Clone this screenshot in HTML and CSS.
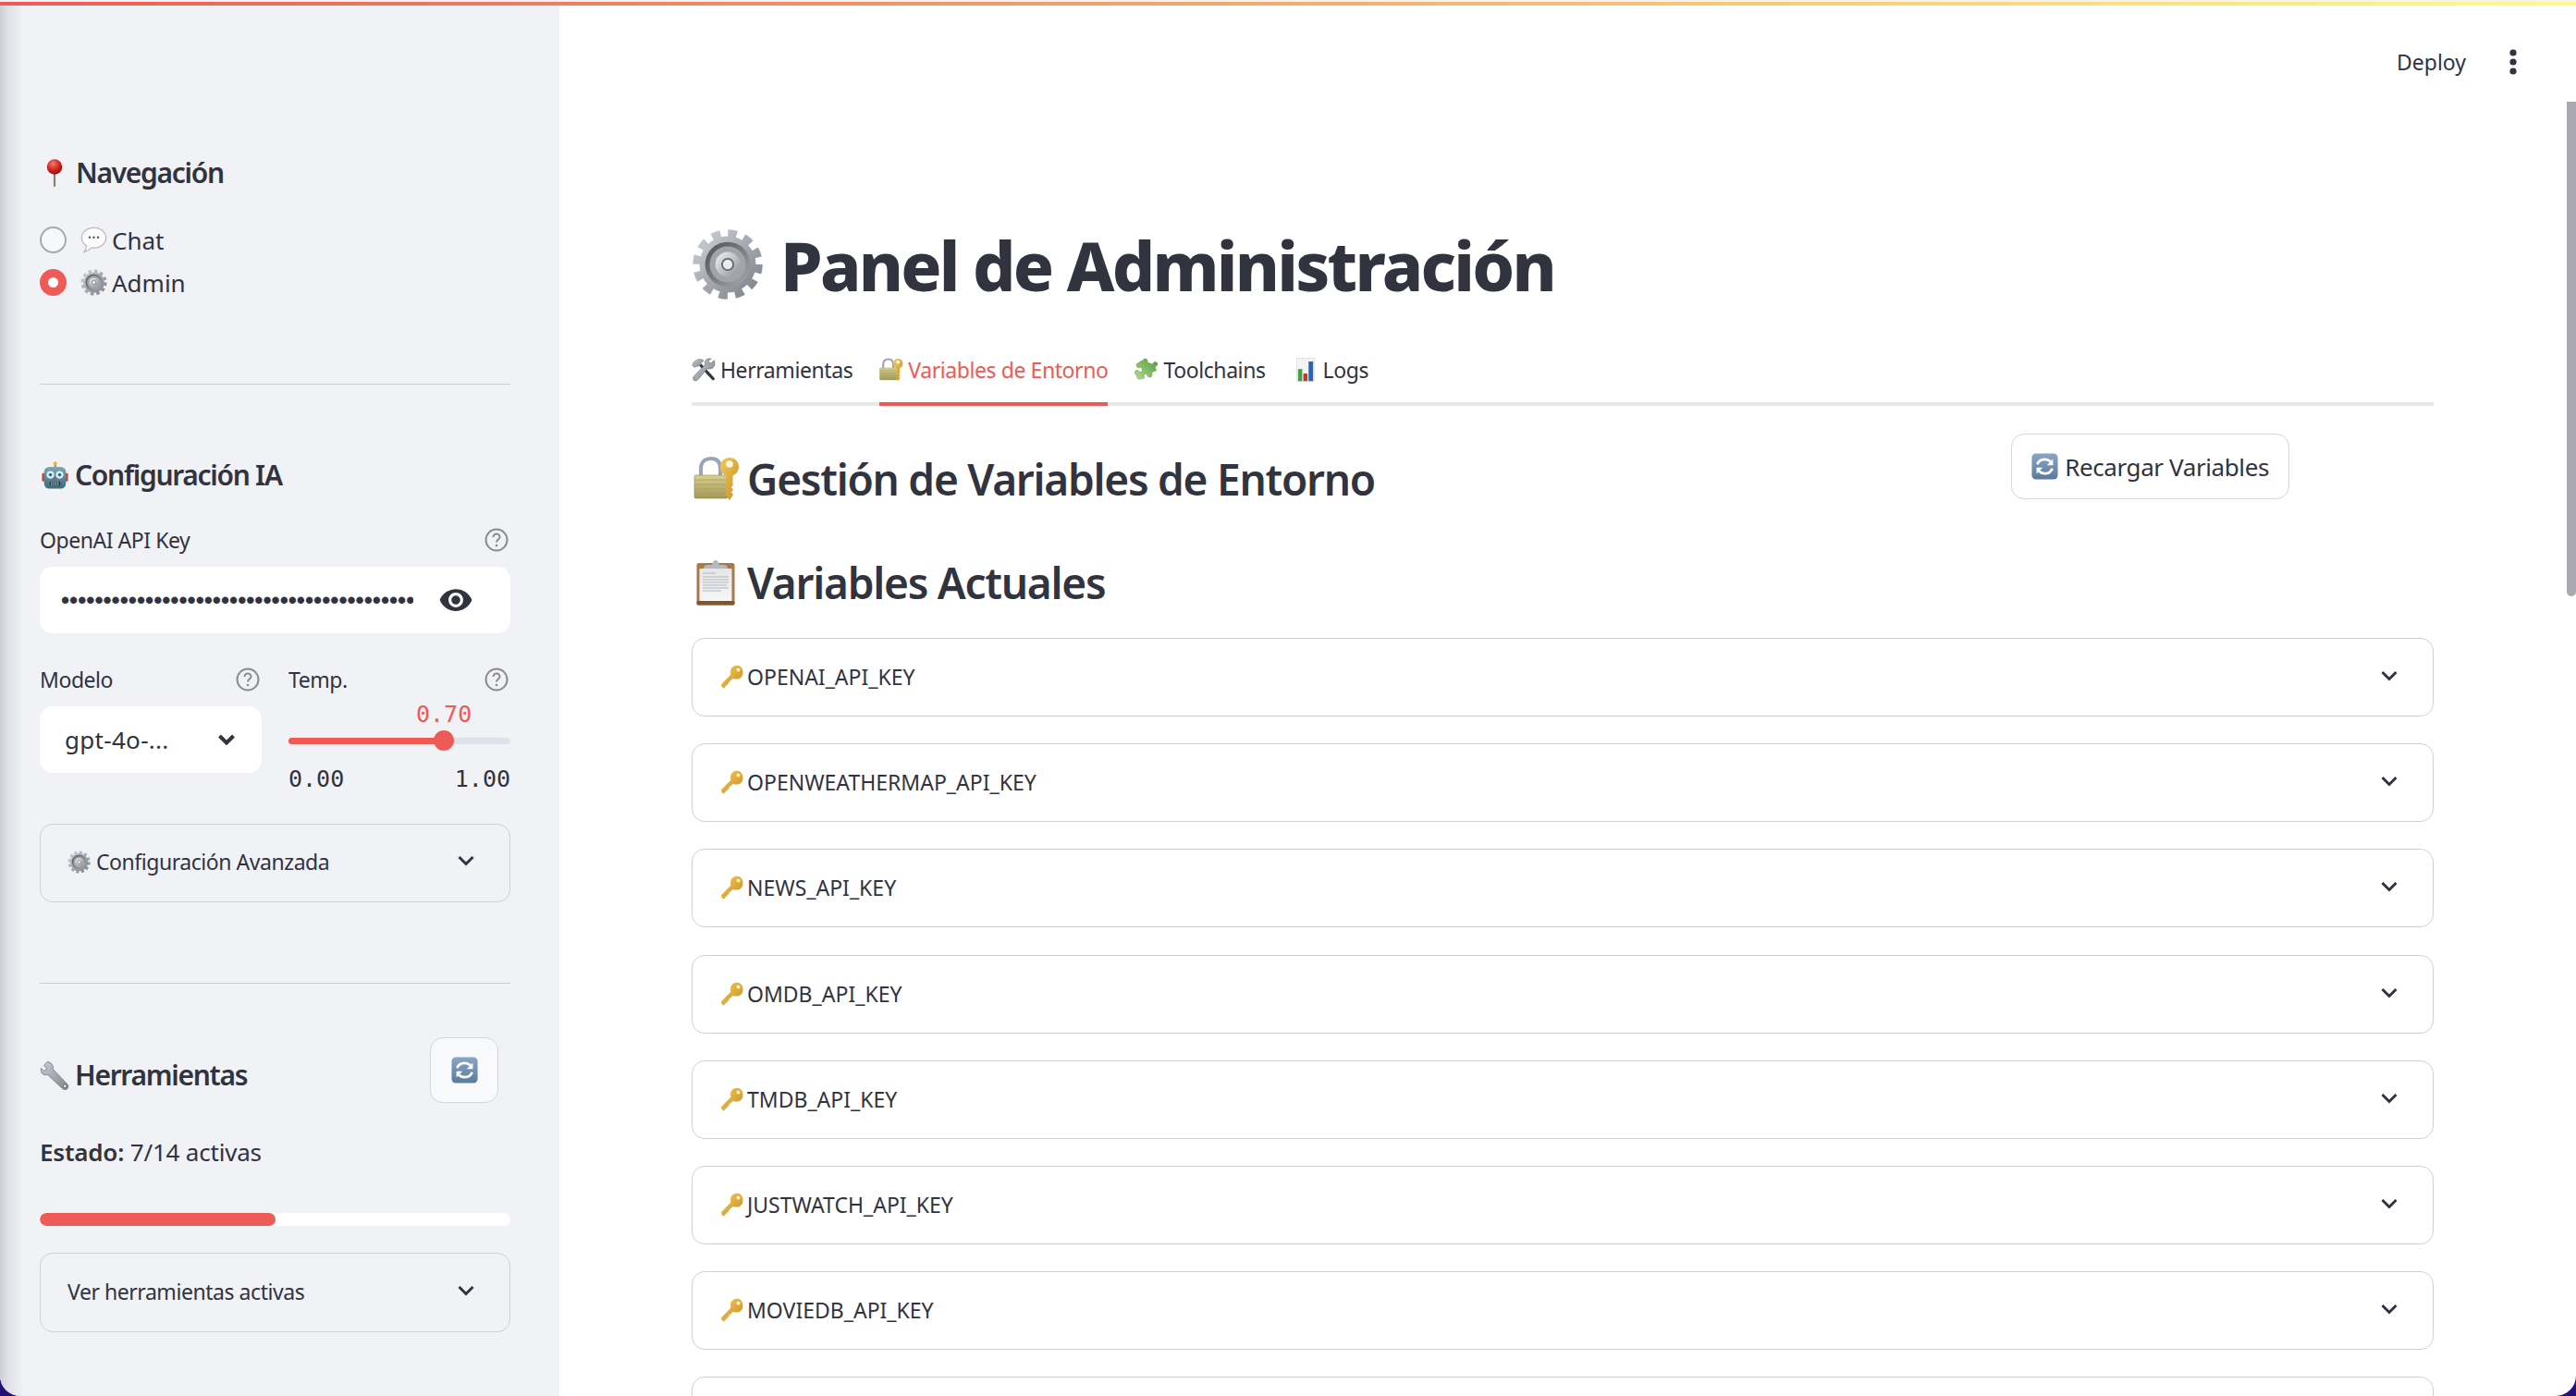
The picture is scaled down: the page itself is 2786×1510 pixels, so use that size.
FILE: index.html
```html
<!DOCTYPE html>
<html lang="es">
<head>
    <meta charset="UTF-8">
    <title>Panel de Administración</title>
    <link rel="stylesheet" href="styles.css">
</head>
<body>

    <!-- Emoji style icons -->
    <svg class="sprite" xmlns="http://www.w3.org/2000/svg">
        <defs>
            <radialGradient id="g-pin" cx="40%" cy="30%" r="70%"><stop offset="0" stop-color="#f47a6c"/><stop offset=".6" stop-color="#d3231f"/><stop offset="1" stop-color="#8e1210"/></radialGradient>
            <linearGradient id="g-steel" x1="0" y1="0" x2="1" y2="1"><stop offset="0" stop-color="#c9ced6"/><stop offset="1" stop-color="#7f848c"/></linearGradient>
            <linearGradient id="g-ring" x1="0" y1="0" x2="1" y2="1"><stop offset="0" stop-color="#4d4f54"/><stop offset="1" stop-color="#a9abb0"/></linearGradient>
            <linearGradient id="g-hub" x1="0" y1="0" x2="1" y2="1"><stop offset="0" stop-color="#f2f3f5"/><stop offset="1" stop-color="#8f9196"/></linearGradient>
            <linearGradient id="g-refresh" x1="0" y1="0" x2="0" y2="1"><stop offset="0" stop-color="#8ba6c4"/><stop offset="1" stop-color="#5a7a9e"/></linearGradient>
            <linearGradient id="g-robot" x1="0" y1="0" x2="0" y2="1"><stop offset="0" stop-color="#7fa7b3"/><stop offset="1" stop-color="#3f6a78"/></linearGradient>
            <linearGradient id="g-brass" x1="0" y1="0" x2="0" y2="1"><stop offset="0" stop-color="#d9d193"/><stop offset=".5" stop-color="#bcb270"/><stop offset="1" stop-color="#a39a5c"/></linearGradient>
            <linearGradient id="g-gold" x1="0" y1="0" x2="1" y2="1"><stop offset="0" stop-color="#f2c95c"/><stop offset="1" stop-color="#c98f22"/></linearGradient>
            <linearGradient id="g-puzzle" x1="0" y1="1" x2="1" y2="0"><stop offset="0" stop-color="#b9dc8e"/><stop offset="1" stop-color="#4f9a3a"/></linearGradient>
            <linearGradient id="g-paper" x1="0" y1="0" x2="0" y2="1"><stop offset="0" stop-color="#e4e6e8"/><stop offset="1" stop-color="#f6f6f6"/></linearGradient>
        </defs>
        <symbol id="i-pin" viewBox="0 0 20 30">
            <rect x="8.900" y="13" width="2.200" height="17" rx="1" fill="#8c7f70"/>
            <circle cx="10" cy="8.500" r="8.300" fill="url(#g-pin)"/>
        </symbol>
        <symbol id="i-bubble" viewBox="0 0 32 32">
            <path d="M16 1.500C7.700 1.500 1.500 6.800 1.500 13.500c0 4 2.200 7.300 5.700 9.400-.3 2.400-1 5-2.700 7.600 3.600-1 6.700-2.900 8.900-5.200 .8.100 1.700.2 2.600.2 8.300 0 14.500-5.300 14.500-12S24.300 1.500 16 1.500z" fill="#fbfbfc" stroke="#b9bbc0" stroke-width="1.400"/>
            <circle cx="11" cy="13" r="1.300" fill="#555"/><circle cx="16" cy="13" r="1.300" fill="#555"/><circle cx="21" cy="13" r="1.300" fill="#555"/>
        </symbol>
        <symbol id="i-gear" viewBox="0 0 64 64">
            <circle cx="32" cy="32" r="26.500" fill="none" stroke="url(#g-steel)" stroke-width="9" stroke-dasharray="7.500 6.380"/>
            <circle cx="32" cy="32" r="25" fill="url(#g-steel)"/>
            <circle cx="32" cy="32" r="20" fill="url(#g-ring)"/>
            <circle cx="32" cy="32" r="16" fill="#a2a4a9"/>
            <circle cx="32" cy="32" r="11" fill="url(#g-hub)"/>
            <circle cx="32" cy="32" r="5" fill="#e9eaec" stroke="#66686d" stroke-width="1.500"/>
        </symbol>
        <symbol id="i-robot" viewBox="0 0 32 34">
            <rect x="15" y="1" width="2.500" height="6" fill="#8b8f99"/>
            <circle cx="16.200" cy="2.500" r="2.200" fill="#f0b23c"/>
            <rect x="0.500" y="14" width="4" height="10" rx="1.500" fill="#c4413a"/>
            <rect x="27.500" y="14" width="4" height="10" rx="1.500" fill="#c4413a"/>
            <rect x="3" y="6.500" width="26" height="26" rx="6" fill="url(#g-robot)"/>
            <circle cx="10.500" cy="16" r="4.500" fill="#d8f0f6"/><circle cx="21.500" cy="16" r="4.500" fill="#d8f0f6"/>
            <circle cx="10.500" cy="16" r="2" fill="#2a6f98"/><circle cx="21.500" cy="16" r="2" fill="#2a6f98"/>
            <path d="M16 18l2 3h-4z" fill="#d2443c"/>
            <rect x="9.500" y="24" width="13" height="5" rx="1.500" fill="#27424e"/>
            <path d="M12 24v5M14.500 24v5M17 24v5M19.500 24v5" stroke="#a8c0c8" stroke-width="1"/>
        </symbol>
        <symbol id="i-wrench" viewBox="0 0 32 32">
            <path d="M8 1.500l-3.500 4 3 3.300-2.800 2.700-3.300-3C1 11.500 1.500 14 4 15.200c1.500.7 3.100.7 4.500.2L25 31c1.600 1.100 3.800.8 5-.6 1.200-1.500 1-3.700-.4-5L14.300 9.500c.5-2.500-.3-5-2.300-6.600-1.100-.9-2.600-1.400-4-1.400z" fill="url(#g-steel)" stroke="#74787f" stroke-width=".8"/>
            <circle cx="27.200" cy="27.800" r="1.800" fill="#f0f2f6" stroke="#5d6066" stroke-width=".8"/>
        </symbol>
        <symbol id="i-refresh" viewBox="0 0 32 32">
            <rect x="0.500" y="0.500" width="31" height="31" rx="5" fill="url(#g-refresh)"/>
            <path d="M7 13.500C8.500 9.500 12 7.500 16 7.500c2.800 0 5 1 6.800 2.800" fill="none" stroke="#fff" stroke-width="3"/>
            <path d="M25.800 7.200v7.300h-7.300z" fill="#fff"/>
            <path d="M25 18.500c-1.500 4-5 6-9 6-2.800 0-5-1-6.800-2.800" fill="none" stroke="#fff" stroke-width="3"/>
            <path d="M6.200 24.800v-7.300h7.300z" fill="#fff"/>
        </symbol>
        <symbol id="i-tools" viewBox="0 0 32 32">
            <path d="M10 10.500L27.500 29.500c.8.900 2.300.3 2.800-.4.500-.7.500-1.900-.3-2.600L13 8z" fill="#33363b"/>
            <path d="M2.500 6.500C6 2 11 1 15.500 3l-1 2.500-2 .5-.5 2-3.500 3.500-2-.5L4 13l-3-3z" fill="url(#g-steel)" stroke="#6d7077" stroke-width=".8"/>
            <path d="M30 3.500l-4 4-3-1 -1-3 4-2c-3-1-7 0-8 3-.5 1.500-.2 3 .5 4L3.300 24.500c-1.600 1.500-1.700 3.600-.5 5 1.300 1.500 3.600 1.500 5 0L21 14.300c3.200 1 6.500.2 8.500-2.300 1.200-1.700 1.500-5 .5-8.500z" fill="url(#g-steel)" stroke="#5f6269" stroke-width=".8"/>
        </symbol>
        <symbol id="i-lockkey" viewBox="0 0 50 48">
            <path d="M8 22V13C8 5 13 2 19 2s10 3 10 11v9" fill="none" stroke="#9aa6b8" stroke-width="4"/>
            <rect x="1" y="20" width="36" height="25" rx="1.500" fill="url(#g-brass)" stroke="#8f8750" stroke-width=".6"/>
            <path d="M1 25h36M1 30h36M1 35h36M1 40h36" stroke="#a89f62" stroke-width=".8"/>
            <path d="M39 1c-5.800 0-10 4.300-10 10 0 4.400 2.500 8 6.300 9.400V42l3.700 5 3.500-5v-2l-2-1.500 2-1.500v-2.500l-2-1.500 2-1.500V20.400c3.800-1.400 6.500-5 6.500-9.400 0-5.700-4.200-10-10-10z" fill="url(#g-gold)"/>
            <circle cx="39" cy="8" r="3.800" fill="#fff7dd"/>
        </symbol>
        <symbol id="i-puzzle" viewBox="0 0 32 32">
            <path d="M13 1.500c2.600-.8 4.500 1 4.200 3.200-.1 1 .3 1.800 1.300 2.100l4.300 1.500c1 .3 1.600-.1 2-1 .9-2 3.500-2.500 5-1 1.400 1.500 1 4-1 4.800-.9.400-1.400 1-1 2l1.200 3.800-5 2c-1 .4-1.300 1.100-.9 2 .9 2 0 4.200-2 4.800-2.200.7-4.200-.9-4.200-3 0-1-.5-1.600-1.500-1.300l-3.400 1.100 1 3c.4 1.100-.1 1.700-1.100 2-2.200.9-4.800.4-5.600 1-1.700-.1-3.400-2-3-4.100.2-1-.3-1.700-1.200-2-2-1-2.300-3.400-.9-4.900 1.400-1.500 3.800-1.200 4.800.5.500.9 1.100 1.200 2 .9l3-1-1.500-4.300c-.3-1-1-1.200-1.900-.8C5.500 14 3.200 13 2.700 10.800 2.200 8.800 3.600 6.900 5.700 6.800c1-.1 1.500-.6 1.300-1.600L10 4c1-.4 1.700-1.700 3-2.500z" fill="url(#g-puzzle)" stroke="#4c8a39" stroke-width=".6"/>
        </symbol>
        <symbol id="i-chart" viewBox="0 0 24 32">
            <rect x="0.500" y="0.500" width="23" height="31" fill="#f3f4f6" stroke="#d5d7da" stroke-width=".8"/>
            <rect x="2" y="15" width="5.500" height="16" fill="#43a047"/>
            <rect x="9" y="21" width="5.500" height="10" fill="#c4392f"/>
            <rect x="16" y="5" width="6" height="26" fill="#2a63b8"/>
        </symbol>
        <symbol id="i-clipboard" viewBox="0 0 42 50">
            <rect x="0.500" y="4" width="41" height="45.500" rx="2.500" fill="#a8794a"/>
            <rect x="3.500" y="10" width="35" height="35" fill="url(#g-paper)"/>
            <path d="M7 15h14M7 19h28M7 22h28M7 25h28M7 28h26M7 31h28M7 34h20" stroke="#b3b5b8" stroke-width="1"/>
            <path d="M8 10c0-2.500 1.500-4 4-4h5c.5-3 2-5 4-5s3.500 2 4 5h5c2.500 0 4 1.500 4 4z" fill="#b4b8c0"/>
            <rect x="0.500" y="45" width="41" height="4.500" rx="1.500" fill="#7d5731"/>
        </symbol>
        <symbol id="i-key" viewBox="0 0 26 26">
            <path d="M18 .8c-4 0-7 3-7 7 0 1 .2 1.900.5 2.700L.8 21.500l.8 1-.8 1.200 1.500.4.700 1.600 1.700-.9 1-1.900 1.700-.4.300-1.700 1.500-.3.400-2 4.400-3.800c1 .5 2.400.9 3.500.9 4 0 7-3 7-7.200S22 .8 18 .8z" fill="url(#g-gold)"/>
            <circle cx="19.500" cy="5.500" r="2" fill="#fff3c4"/>
        </symbol>
        <symbol id="i-help" viewBox="0 0 26 26">
            <circle cx="13" cy="13" r="11.500" fill="none" stroke="currentColor" stroke-width="2"/>
            <path d="M9.500 10a3.500 3.500 0 0 1 7 0c0 2.400-3.500 2.800-3.500 5.500" fill="none" stroke="currentColor" stroke-width="2"/>
            <circle cx="13" cy="19" r="1.300" fill="currentColor"/>
        </symbol>
        <symbol id="i-chevron" viewBox="0 0 18 12">
            <path d="M1.500 2l7.500 7.500L16.500 2" fill="none" stroke="currentColor"/>
        </symbol>
    </svg>

    <div class="window">
        <div class="top-strip"><div class="top-gradient"></div></div>

        <div class="app">
            <!-- Sidebar -->
            <aside class="sidebar">
                <h3 class="side-title nav-title"><svg class="ic-pin"><use href="#i-pin"/></svg>Navegación</h3>
                <div class="radios">
                    <div class="radio-row"><span class="radio"></span><svg class="ic-29"><use href="#i-bubble"/></svg><span>Chat</span></div>
                    <div class="radio-row"><span class="radio checked"></span><svg class="ic-29"><use href="#i-gear"/></svg><span>Admin</span></div>
                </div>

                <hr class="divider first-divider">

                <h3 class="side-title ia-title"><svg class="ic-robot"><use href="#i-robot"/></svg>Configuración IA</h3>

                <div class="label-row key-label"><span>OpenAI API Key</span><svg class="ic-help"><use href="#i-help"/></svg></div>
                <div class="text-input">
                    <input class="secret" type="password" value="sk-proj-000000000000000000000000000000000000000000000000000000000000" readonly>
                    <svg class="ic-eye" viewBox="0 0 24 24"><path d="M12 4.500C7 4.500 2.730 7.610 1 12c1.730 4.390 6 7.500 11 7.500s9.270-3.110 11-7.500c-1.730-4.390-6-7.500-11-7.500zM12 17c-2.760 0-5-2.240-5-5s2.240-5 5-5 5 2.240 5 5-2.240 5-5 5zm0-8c-1.660 0-3 1.340-3 3s1.340 3 3 3 3-1.340 3-3-1.340-3-3-3z"/></svg>
                </div>

                <div class="model-grid">
                    <div>
                        <div class="label-row"><span>Modelo</span><svg class="ic-help"><use href="#i-help"/></svg></div>
                        <div class="select"><span>gpt-4o-...</span><svg class="ic-chevron bold"><use href="#i-chevron"/></svg></div>
                    </div>
                    <div>
                        <div class="label-row"><span>Temp.</span><svg class="ic-help"><use href="#i-help"/></svg></div>
                        <div class="slider-value">0.70</div>
                        <div class="slider-track">
                            <div class="slider-fill" style="width: 70%"><span class="slider-thumb"></span></div>
                        </div>
                        <div class="slider-ends"><span>0.00</span><span>1.00</span></div>
                    </div>
                </div>

                <div class="expander side-expander advanced">
                    <span class="expander-label"><svg class="ic-gear-small"><use href="#i-gear"/></svg>Configuración Avanzada</span>
                    <svg class="ic-chevron"><use href="#i-chevron"/></svg>
                </div>

                <hr class="divider second-divider">

                <div class="tools-head">
                    <h3 class="side-title tools-title"><svg class="ic-wrench"><use href="#i-wrench"/></svg>Herramientas</h3>
                    <button class="icon-button"><svg class="ic-29"><use href="#i-refresh"/></svg></button>
                </div>
                <p class="status"><strong>Estado:</strong> 7/14 activas</p>
                <div class="progress"><div class="progress-fill" style="width: 50%"></div></div>
                <div class="expander side-expander active-tools">
                    <span class="expander-label">Ver herramientas activas</span>
                    <svg class="ic-chevron"><use href="#i-chevron"/></svg>
                </div>
            </aside>

            <!-- Main panel -->
            <main class="main">
                <div class="toolbar">
                    <span class="deploy">Deploy</span>
                    <svg class="ic-kebab" viewBox="0 0 8 28"><circle cx="4" cy="4" r="3.600"/><circle cx="4" cy="14" r="3.600"/><circle cx="4" cy="24" r="3.600"/></svg>
                </div>

                <div class="content">
                    <h1 class="page-title"><svg class="ic-title"><use href="#i-gear"/></svg>Panel de Administración</h1>

                    <div class="tabs">
                        <div class="tab"><svg class="ic-tab"><use href="#i-tools"/></svg>Herramientas</div>
                        <div class="tab active"><svg class="ic-tab"><use href="#i-lockkey"/></svg>Variables de Entorno</div>
                        <div class="tab"><svg class="ic-tab"><use href="#i-puzzle"/></svg>Toolchains</div>
                        <div class="tab"><svg class="ic-tab-chart"><use href="#i-chart"/></svg>Logs</div>
                    </div>

                    <div class="section-head">
                        <h2 class="section-title env-title"><svg class="ic-lock"><use href="#i-lockkey"/></svg>Gestión de Variables de Entorno</h2>
                        <button class="reload"><svg class="ic-29"><use href="#i-refresh"/></svg>Recargar Variables</button>
                    </div>

                    <h2 class="section-title current-title"><svg class="ic-clip"><use href="#i-clipboard"/></svg>Variables Actuales</h2>

                    <div class="var-list">
                        <div class="expander var"><span class="expander-label"><svg class="ic-key"><use href="#i-key"/></svg>OPENAI_API_KEY</span><svg class="ic-chevron"><use href="#i-chevron"/></svg></div>
                        <div class="expander var"><span class="expander-label"><svg class="ic-key"><use href="#i-key"/></svg>OPENWEATHERMAP_API_KEY</span><svg class="ic-chevron"><use href="#i-chevron"/></svg></div>
                        <div class="expander var"><span class="expander-label"><svg class="ic-key"><use href="#i-key"/></svg>NEWS_API_KEY</span><svg class="ic-chevron"><use href="#i-chevron"/></svg></div>
                        <div class="expander var"><span class="expander-label"><svg class="ic-key"><use href="#i-key"/></svg>OMDB_API_KEY</span><svg class="ic-chevron"><use href="#i-chevron"/></svg></div>
                        <div class="expander var"><span class="expander-label"><svg class="ic-key"><use href="#i-key"/></svg>TMDB_API_KEY</span><svg class="ic-chevron"><use href="#i-chevron"/></svg></div>
                        <div class="expander var"><span class="expander-label"><svg class="ic-key"><use href="#i-key"/></svg>JUSTWATCH_API_KEY</span><svg class="ic-chevron"><use href="#i-chevron"/></svg></div>
                        <div class="expander var"><span class="expander-label"><svg class="ic-key"><use href="#i-key"/></svg>MOVIEDB_API_KEY</span><svg class="ic-chevron"><use href="#i-chevron"/></svg></div>
                        <div class="expander var"></div>
                    </div>
                </div>

                <div class="scroll-thumb"></div>
            </main>
        </div>
    </div>

</body>
</html>
```

FILE: styles.css
```css
/* Basic Reset */
* {
    margin: 0;
    padding: 0;
    box-sizing: border-box;
}

html, body {
    height: 100%;
    overflow: hidden;
}

body {
    font-family: "Noto Sans", sans-serif;
    font-size: 26px;
    color: #31333f;
    background: #26107a;
}

svg {
    flex: none;
    display: block;
}

.sprite {
    width: 0;
    height: 0;
}

.window {
    height: 1510px;
    display: flex;
    flex-direction: column;
    background: #fff;
    border-radius: 0 0 22px 22px;
    overflow: hidden;
}

.top-strip {
    height: 6px;
    padding-top: 2px;
    flex: none;
    background: #f3f3f5;
}

.top-gradient {
    height: 4px;
    background: linear-gradient(90deg, #ee5a55, #fffd80);
}

.app {
    flex: 1;
    display: flex;
    min-height: 0;
}

/* Sidebar */
.sidebar {
    width: 605px;
    flex: none;
    padding: 0 53px 0 43px;
    background: linear-gradient(90deg, #cdced3 0, #dfe0e5 8px, #f0f2f6 26px);
}

.side-title {
    display: flex;
    align-items: center;
    height: 40px;
    font-size: 30px;
    font-weight: 600;
    letter-spacing: -1.3px;
}

.nav-title {
    margin-top: 160px;
}

.ic-pin {
    width: 20px;
    height: 30px;
    margin: 2px 13px 0 6px;
}

.radios {
    margin-top: 39px;
    display: flex;
    flex-direction: column;
    gap: 17px;
}

.radio-row {
    display: flex;
    align-items: center;
    height: 29px;
    font-size: 26px;
}

.radio {
    width: 29px;
    height: 29px;
    border-radius: 50%;
    border: 2px solid #a9a9b0;
    background: #f7f8fa;
    margin-right: 15px;
    flex: none;
}

.radio.checked {
    border: 9px solid #ee5a55;
    background: #fff;
}

.ic-29 {
    width: 29px;
    height: 29px;
    margin-right: 5px;
}

.divider {
    border: none;
    height: 1px;
    background: #cdcdd2;
}

.first-divider {
    margin-top: 95px;
}

.second-divider {
    margin-top: 87px;
}

.ia-title {
    margin-top: 77px;
}

.ic-robot {
    width: 29px;
    height: 31px;
    margin: 2px 7px 0 2px;
}

.label-row {
    display: flex;
    align-items: center;
    justify-content: space-between;
    height: 30px;
    font-size: 23px;
    letter-spacing: -.45px;
}

.key-label {
    margin-top: 36px;
}

.ic-help {
    width: 26px;
    height: 26px;
    margin-right: 2px;
    color: #8b8b91;
}

.text-input {
    display: flex;
    align-items: center;
    justify-content: space-between;
    height: 72px;
    margin-top: 14px;
    padding: 0 40px 0 23px;
    background: #fff;
    border-radius: 14px;
}

.secret {
    width: 381px;
    border: none;
    outline: none;
    background: transparent;
    font-family: "Liberation Sans", sans-serif;
    font-size: 26px;
    font-weight: 700;
    color: #31333f;
}

.ic-eye {
    width: 38px;
    height: 38px;
    fill: #31333f;
}

.model-grid {
    display: grid;
    grid-template-columns: 240px 240px;
    gap: 29px;
    margin-top: 35px;
}

.select {
    display: flex;
    align-items: center;
    justify-content: space-between;
    height: 72px;
    margin-top: 14px;
    padding: 0 29px 0 27px;
    background: #fff;
    border-radius: 14px;
    font-size: 26px;
    letter-spacing: .3px;
}

.ic-chevron {
    width: 18px;
    height: 12px;
    color: #31333f;
    stroke-width: 3;
}

.ic-chevron.bold {
    stroke-width: 4;
}

.slider-value {
    margin: 10px 0 0 138px;
    width: 60px;
    height: 26px;
    line-height: 26px;
    font-family: "DejaVu Sans Mono", monospace;
    font-size: 25px;
    color: #ee5a55;
    text-align: center;
}

.slider-track {
    height: 7px;
    margin-top: 12px;
    border-radius: 4px;
    background: #dfe2ea;
}

.slider-fill {
    position: relative;
    height: 7px;
    border-radius: 4px;
    background: #ee5a55;
}

.slider-thumb {
    position: absolute;
    right: -11px;
    top: -8px;
    width: 22px;
    height: 22px;
    border-radius: 50%;
    background: #ee5a55;
}

.slider-ends {
    display: flex;
    justify-content: space-between;
    margin-top: 25px;
    height: 26px;
    line-height: 26px;
    font-family: "DejaVu Sans Mono", monospace;
    font-size: 25px;
}

/* Expanders */
.expander {
    display: flex;
    align-items: center;
    justify-content: space-between;
    height: 85px;
    border: 1px solid #cfd0d4;
    border-radius: 14px;
    flex: none;
}

.expander .ic-chevron {
    margin-bottom: 5px;
}

.expander-label {
    display: flex;
    align-items: center;
    margin-bottom: 3px;
    font-size: 23px;
    letter-spacing: -.45px;
}

.side-expander {
    padding: 0 38px 0 29px;
}

.advanced {
    margin-top: 35px;
}

.active-tools {
    margin-top: 29px;
    height: 86px;
}

.ic-gear-small {
    width: 25px;
    height: 25px;
    margin-right: 6px;
}

.tools-head {
    display: flex;
    justify-content: space-between;
    align-items: flex-start;
    margin-top: 58px;
    padding-right: 13px;
}

.tools-title {
    margin-top: 20px;
}

.ic-wrench {
    width: 32px;
    height: 32px;
    margin: 2px 6px 0 0;
}

.icon-button {
    display: flex;
    align-items: center;
    justify-content: center;
    width: 74px;
    height: 71px;
    border: 1px solid #d5d5da;
    border-radius: 14px;
    background: #f8f9fb;
}

.icon-button .ic-29 {
    margin: 0;
}

.status {
    margin-top: 33px;
    height: 40px;
    line-height: 40px;
    font-size: 26px;
    letter-spacing: -.2px;
}

.status strong {
    font-weight: 600;
}

.progress {
    margin-top: 46px;
    height: 14px;
    border-radius: 7px;
    background: #fff;
    overflow: hidden;
}

.progress-fill {
    height: 14px;
    border-radius: 7px;
    background: #ee5a55;
}

/* Main panel */
.main {
    flex: 1;
    position: relative;
    min-width: 0;
}

.toolbar {
    display: flex;
    justify-content: flex-end;
    align-items: center;
    height: 122px;
    padding-right: 64px;
    gap: 47px;
}

.deploy {
    font-size: 23px;
}

.ic-kebab {
    width: 8px;
    height: 28px;
    fill: #31333f;
}

.content {
    padding: 0 154px 0 143px;
}

.page-title {
    display: flex;
    align-items: center;
    height: 100px;
    margin-top: 108px;
    font-size: 73px;
    font-weight: 800;
    letter-spacing: -2.7px;
}

.ic-title {
    width: 78px;
    height: 78px;
    margin-right: 18px;
}

.tabs {
    display: flex;
    gap: 29px;
    margin-top: 29px;
    border-bottom: 4px solid #e9e9ea;
}

.tab {
    display: flex;
    align-items: center;
    height: 74px;
    margin-bottom: -4px;
    border-bottom: 4px solid transparent;
    font-size: 23px;
    letter-spacing: -.42px;
}

.tab.active {
    color: #ee5a55;
    border-bottom-color: #ee5a55;
}

.ic-tab {
    width: 26px;
    height: 26px;
    margin-right: 5px;
}

.ic-tab-chart {
    width: 22px;
    height: 26px;
    margin: 0 8px 0 3px;
}

.section-head {
    display: flex;
    justify-content: space-between;
    align-items: flex-start;
    margin-top: 30px;
    padding-right: 156px;
}

.section-title {
    display: flex;
    align-items: center;
    height: 60px;
    font-size: 46px;
    font-weight: 600;
    letter-spacing: -1.25px;
}

.env-title {
    margin-top: 19px;
}

.current-title {
    margin-top: 52px;
}

.ic-lock {
    width: 50px;
    height: 48px;
    margin: 0 8px 0 2px;
}

.ic-clip {
    width: 42px;
    height: 50px;
    margin: 0 13px 0 5px;
}

.reload {
    display: flex;
    align-items: center;
    height: 71px;
    padding: 0 21px;
    border: 1px solid #d5d5da;
    border-radius: 14px;
    background: #fff;
    font: inherit;
    font-size: 26px;
    letter-spacing: -.4px;
    color: #31333f;
}

.reload .ic-29 {
    margin-right: 7px;
}

.var-list {
    display: flex;
    flex-direction: column;
    gap: 29.200px;
    margin-top: 30px;
}

.var {
    padding: 0 38px 0 30px;
}

.var .expander-label {
    margin-bottom: 1px;
    letter-spacing: 0;
}

.var .ic-chevron {
    margin-bottom: 3px;
}

.ic-key {
    width: 26px;
    height: 26px;
    margin-right: 3px;
}

.scroll-thumb {
    position: absolute;
    right: 0;
    top: 104px;
    width: 10px;
    height: 535px;
    background: #a9a9ae;
    border-radius: 0 0 5px 5px;
}
```
